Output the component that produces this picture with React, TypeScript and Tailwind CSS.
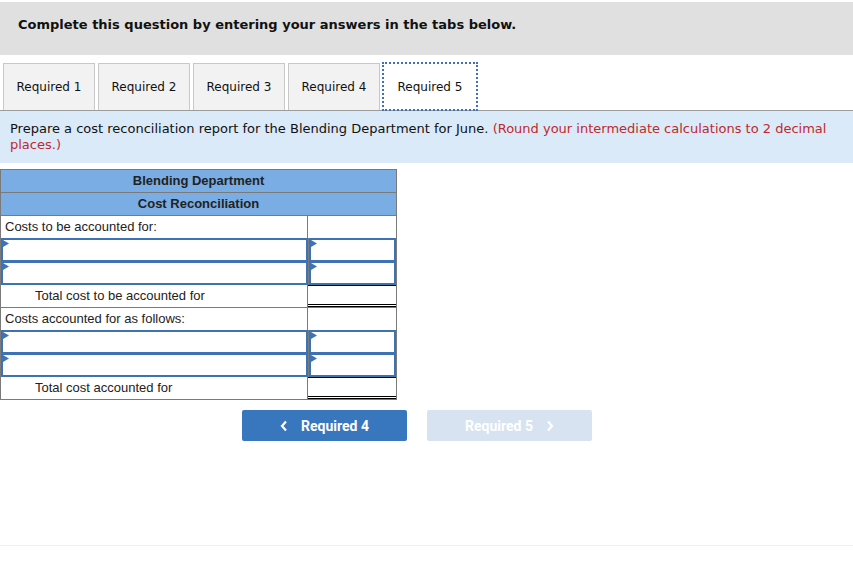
import React from 'react';

const tabs = ['Required 1', 'Required 2', 'Required 3', 'Required 4', 'Required 5'];

function Marker() {
    return (
        <svg className="absolute left-0 top-0" width="6" height="8" viewBox="0 0 6 8">
            <path d="M0 0 L6 3.5 L0 7 Z" fill="#3a74bd" />
        </svg>
    );
}

function InputCell() {
    return (
        <div className="relative h-full w-full border-2 border-[#3d72b6] bg-white">
            <Marker />
        </div>
    );
}

function LabelRow({ label, indent }: { label: string; indent?: boolean }) {
    return (
        <div className="flex h-[23px] border-b border-[#7a7a7a]">
            <div className={`flex w-[307px] items-center border-r border-[#7a7a7a] ${indent ? 'pl-[34px]' : 'pl-[4px]'}`}>
                {label}
            </div>
            <div className="flex-1" />
        </div>
    );
}

function TotalRow({ label }: { label: string }) {
    return (
        <div className="flex h-[23px] border-b border-[#7a7a7a]">
            <div className="flex w-[307px] items-center border-r border-[#7a7a7a] pl-[34px]">{label}</div>
            <div className="flex-1">
                <div className="h-full border-t border-b-[3px] border-black [border-bottom-style:double]" />
            </div>
        </div>
    );
}

function InputRow() {
    return (
        <div className="-mt-px flex h-[24px]">
            <div className="w-[307px]">
                <InputCell />
            </div>
            <div className="flex-1 border-l border-[#7a7a7a]">
                <InputCell />
            </div>
        </div>
    );
}

export default function App() {
    return (
        <div className="h-[566px] w-[853px] bg-white pt-[2px] font-['DejaVu_Sans',sans-serif] text-[#111]">
            <div className="h-[53px] bg-[#e0e0e0] pl-[18px] pt-[14px] text-[13px] leading-[18px] font-bold">
                Complete this question by entering your answers in the tabs below.
            </div>

            <div className="mt-[8px] flex gap-[3px] border-b border-[#9c9c9c] pl-[3px] text-[12px]">
                {tabs.map((t, i) => (
                    <div
                        key={t}
                        className={
                            i === 4
                                ? 'flex h-[47px] w-[94px] items-center justify-center bg-white outline-2 outline-dotted outline-[#3b73b9] -outline-offset-1'
                                : 'flex h-[47px] w-[92px] items-center justify-center border border-b-0 border-[#c8c8c8] bg-[#f2f2f2]'
                        }
                    >
                        {t}
                    </div>
                ))}
            </div>

            <div className="h-[52px] bg-[#dbeaf8] px-[10px] pt-[10px] text-[13px] leading-[16px]">
                Prepare a cost reconciliation report for the Blending Department for June.{' '}
                <span className="text-[#c0282d]">(Round your intermediate calculations to 2 decimal places.)</span>
            </div>

            <div className="mt-[6px] w-[397px] border-l border-r border-t border-[#7a7a7a] font-['Liberation_Sans',Arial,sans-serif] text-[13px] text-[#222]">
                <div className="flex h-[23px] items-center justify-center border-b border-[#7a7a7a] bg-[#79ade3] font-bold">
                    Blending Department
                </div>
                <div className="flex h-[23px] items-center justify-center border-b border-[#7a7a7a] bg-[#79ade3] font-bold">
                    Cost Reconciliation
                </div>
                <LabelRow label="Costs to be accounted for:" />
                <InputRow />
                <InputRow />
                <TotalRow label="Total cost to be accounted for" />
                <LabelRow label="Costs accounted for as follows:" />
                <InputRow />
                <InputRow />
                <TotalRow label="Total cost accounted for" />
            </div>

            <div className="mt-[10px] flex gap-[20px] pl-[242px] font-['Roboto',sans-serif] text-[14px] font-bold text-white">
                <div className="flex h-[31px] w-[165px] items-center justify-center gap-[13px] rounded-[2px] bg-[#3877bd] pt-px">
                    <svg width="8" height="12" viewBox="0 0 8 12">
                        <path d="M6 1.5 L2 6 L6 10.5" stroke="white" strokeWidth="2.2" fill="none" />
                    </svg>
                    <span>Required 4</span>
                </div>
                <div className="flex h-[31px] w-[165px] items-center justify-center gap-[13px] rounded-[2px] bg-[#d7e3f1] pt-px">
                    <span>Required 5</span>
                    <svg width="8" height="12" viewBox="0 0 8 12">
                        <path d="M2 1.5 L6 6 L2 10.5" stroke="white" strokeWidth="2.2" fill="none" />
                    </svg>
                </div>
            </div>

            <div className="mt-[104px] border-t border-[#eeeeee]" />
        </div>
    );
}
